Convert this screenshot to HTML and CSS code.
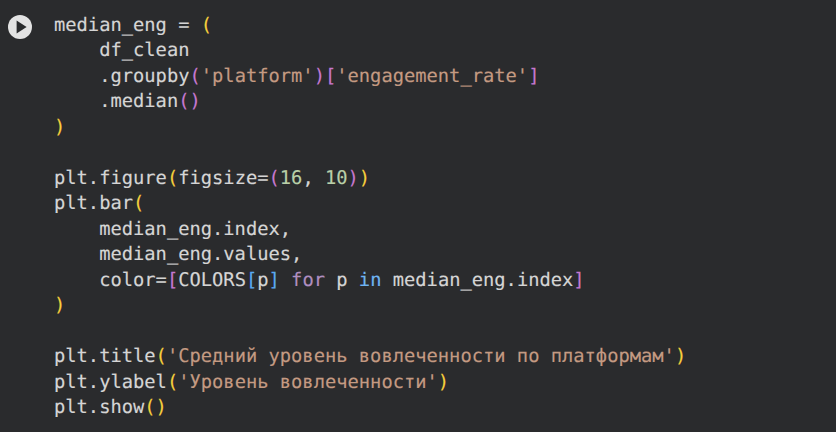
FILE: index.html
```html
<!DOCTYPE html>
<html lang="ru">
<head>
<meta charset="utf-8">
<title>Notebook cell</title>
<link rel="stylesheet" href="styles.css">
</head>
<body>
<main class="cell">
<button class="run" aria-label="Run cell">
<svg viewBox="0 0 24 24" width="24" height="24"><circle cx="12" cy="12" r="12" fill="#e3e3e3"/><path d="M8.6 5.6 18.6 12 8.6 18.4Z" fill="#2a2b2d"/></svg>
</button>
<pre class="code"><code>median_eng = <span class="y">(</span>
    df_clean
    .groupby<span class="m">(</span><span class="s">'platform'</span><span class="m">)[</span><span class="s">'engagement_rate'</span><span class="m">]</span>
    .median<span class="m">()</span>
<span class="y">)</span>

plt.figure<span class="y">(</span>figsize=<span class="m">(</span><span class="n">16</span>, <span class="n">10</span><span class="m">)</span><span class="y">)</span>
plt.bar<span class="y">(</span>
    median_eng.index,
    median_eng.values,
    color=<span class="m">[</span>COLORS<span class="b">[</span>p<span class="b">]</span> <span class="k">for</span> p <span class="i">in</span> median_eng.index<span class="m">]</span>
<span class="y">)</span>

plt.title<span class="y">(</span><span class="s">'Средний уровень вовлеченности по платформам'</span><span class="y">)</span>
plt.ylabel<span class="y">(</span><span class="s">'Уровень вовлеченности'</span><span class="y">)</span>
plt.show<span class="y">()</span></code></pre>
</main>
</body>
</html>
```
FILE: styles.css
```css
html, body {
  margin: 0;
  padding: 0;
  height: 100%;
  background: #2a2b2d;
}
.cell {
  display: flex;
  align-items: flex-start;
  width: 836px;
  height: 432px;
  overflow: hidden;
  box-sizing: border-box;
  padding: 13px 0 0 8px;
}
.run {
  flex: none;
  width: 24px;
  height: 24px;
  padding: 0;
  margin: 2px 22px 0 0;
  border: 0;
  background: none;
  display: block;
}
.run svg { display: block; }
.code {
  margin: 0;
  font-family: "DejaVu Sans Mono", monospace;
  font-size: 18.75px;
  line-height: 25.47px;
  color: #d5d5d5;
  text-rendering: geometricPrecision;
  -webkit-text-stroke: 0.15px currentColor;
}
.y { color: #f5cf3c; }
.m { color: #c678cf; }
.b { color: #5aa9f0; }
.s { color: #c49a82; }
.n { color: #b9cfa8; }
.k { color: #b08fc0; }
.i { color: #6fb4f2; }
```
